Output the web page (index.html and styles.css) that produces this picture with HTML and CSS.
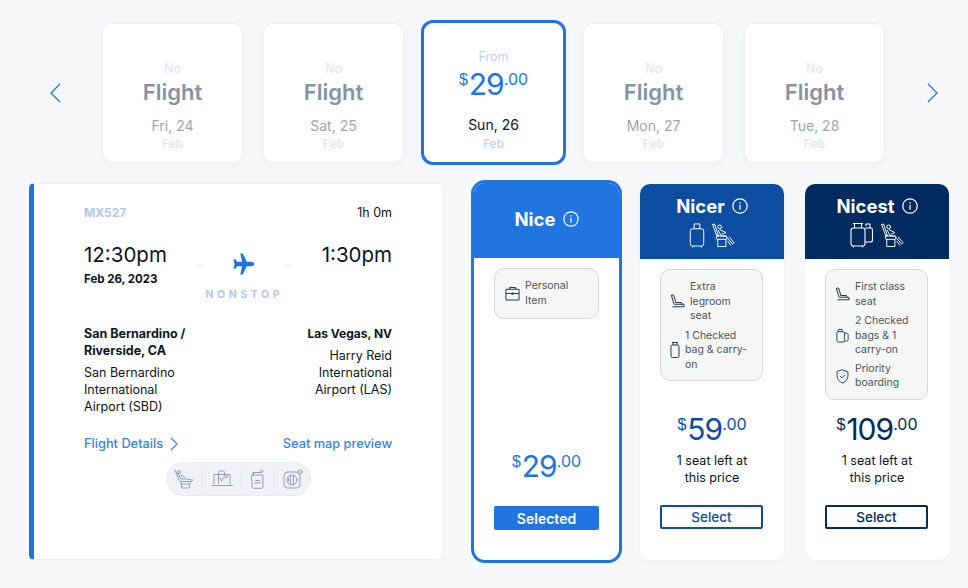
FILE: index.html
```html
<!DOCTYPE html>
<html lang="en">
<head>
    <meta charset="UTF-8">
    <title>Select fare</title>
    <link rel="stylesheet" href="styles.css">
</head>
<body>

<svg class="sprite" xmlns="http://www.w3.org/2000/svg">
    <symbol id="info" viewBox="0 0 16 16">
        <circle cx="8" cy="8" r="7.2" fill="none" stroke="currentColor" stroke-width="1.2"/>
        <rect x="7.4" y="6.8" width="1.2" height="5" fill="currentColor"/>
        <rect x="7.4" y="4.2" width="1.2" height="1.4" fill="currentColor"/>
    </symbol>
    <symbol id="recline" viewBox="0 0 24 26">
        <g fill="none" stroke="currentColor" stroke-width="1" stroke-linejoin="round" stroke-linecap="round">
            <circle cx="8" cy="4" r="2"/>
            <path d="M.7 1.500L2.700 1l4 12.500H5L.7 1.500z"/>
            <path d="M6.500 7.500l3 6h5M8.500 7l6 3-4 1.500"/>
            <rect x="4.500" y="13.500" width="11" height="3.500" rx="1.200"/>
            <path d="M6 17v7.500h8.500V17"/>
            <path d="M16 15.500l5.500 6.500 1.500-1.500-5-6M16.500 19l3 4"/>
        </g>
    </symbol>
    <symbol id="suitcase" viewBox="0 0 16 26">
        <g fill="none" stroke="currentColor" stroke-width="1" stroke-linejoin="round">
            <path d="M5 6V1h6v5"/>
            <rect x="1" y="6" width="14" height="18" rx="2.500"/>
            <path d="M3.500 24v1.500M12.500 24v1.500"/>
        </g>
    </symbol>
    <symbol id="two-bags" viewBox="0 0 24 26">
        <g fill="none" stroke="currentColor" stroke-width="1.100" stroke-linejoin="round">
            <path d="M4.500 6V1.500h7V6"/>
            <path d="M3 1.500h10"/>
            <rect x="1" y="6" width="14" height="18" rx="2.500"/>
            <path d="M3.500 24v1.500M12.500 24v1.500"/>
            <path d="M16 4V2h4v4"/>
            <path d="M15 6h5.500a2 2 0 0 1 2 2v10a2 2 0 0 1-2 2H15"/>
        </g>
    </symbol>
    <symbol id="briefcase" viewBox="0 0 16 16">
        <g fill="none" stroke="currentColor" stroke-width="1.100" stroke-linejoin="round">
            <path d="M5 3.500V1.500h6v2"/>
            <rect x="1" y="3.500" width="14" height="11.500" rx="1"/>
            <path d="M1 8h14"/>
            <path d="M7.500 7.500h1v1.300h-1z"/>
        </g>
    </symbol>
    <symbol id="seat" viewBox="0 0 16 16">
        <g fill="none" stroke="currentColor" stroke-width="1.100" stroke-linejoin="round" stroke-linecap="round">
            <path d="M1.500 1.500c1-.8 2.300-.5 2.700.6l2 6.900h5.300c.8 0 1.200.5 1.200 1.200v.8"/>
            <path d="M3 13.500h11c.8 0 1.200-.5 1-1.200l-.5-1.300H5.500c-.8 0-1.300-.5-1.600-1.300L1.500 1.500"/>
        </g>
    </symbol>
    <symbol id="bag" viewBox="0 0 10 18">
        <g fill="none" stroke="currentColor" stroke-width="1" stroke-linejoin="round">
            <path d="M3 4V1.500h4V4M2 1.500h6"/>
            <rect x="1" y="4" width="8" height="12.500" rx="1.500"/>
        </g>
    </symbol>
    <symbol id="bags" viewBox="0 0 14 16">
        <g fill="none" stroke="currentColor" stroke-width="1" stroke-linejoin="round">
            <path d="M2.500 4V1.500h4V4"/>
            <rect x="1" y="4" width="8" height="11" rx="1.500"/>
            <path d="M9 5.500h2.500c.8 0 1.500.6 1.500 1.500v5.500c0 .8-.7 1.500-1.500 1.500H9"/>
        </g>
    </symbol>
    <symbol id="shield" viewBox="0 0 14 16">
        <g fill="none" stroke="currentColor" stroke-width="1" stroke-linejoin="round" stroke-linecap="round">
            <path d="M7 1l5.800 2v4.500c0 3.500-2.500 6-5.800 7.500C3.700 13.500 1.200 11 1.200 7.500V3z"/>
            <path d="M4.700 7.800l1.700 1.700 3-3"/>
        </g>
    </symbol>
</svg>

<div class="date-row">
    <svg class="arrow arrow-left" viewBox="0 0 12 20"><path d="M11 1L2 10l9 9"/></svg>

    <div class="day-card">
        <div class="day-top">No</div>
        <div class="day-flight">Flight</div>
        <div class="day-date">Fri, 24</div>
        <div class="day-month">Feb</div>
    </div>
    <div class="day-card">
        <div class="day-top">No</div>
        <div class="day-flight">Flight</div>
        <div class="day-date">Sat, 25</div>
        <div class="day-month">Feb</div>
    </div>
    <div class="day-card day-selected">
        <div class="day-top">From</div>
        <div class="price day-price"><span class="cur">$</span><span class="amt">29</span><span class="cents">.00</span></div>
        <div class="day-date">Sun, 26</div>
        <div class="day-month">Feb</div>
    </div>
    <div class="day-card">
        <div class="day-top">No</div>
        <div class="day-flight">Flight</div>
        <div class="day-date">Mon, 27</div>
        <div class="day-month">Feb</div>
    </div>
    <div class="day-card">
        <div class="day-top">No</div>
        <div class="day-flight">Flight</div>
        <div class="day-date">Tue, 28</div>
        <div class="day-month">Feb</div>
    </div>

    <svg class="arrow arrow-right" viewBox="0 0 12 20"><path d="M1 1l9 9-9 9"/></svg>
</div>

<div class="main-row">
    <div class="flight-card">
        <div class="flight-head">
            <span class="flight-no">MX527</span>
            <span class="duration">1h 0m</span>
        </div>

        <div class="times">
            <div>
                <div class="time">12:30pm</div>
                <div class="flight-date">Feb 26, 2023</div>
            </div>
            <div class="stop">
                <div class="stop-line">
                    <span class="dash"></span>
                    <svg class="plane" viewBox="0 0 22 22"><path d="M21.500 11c0-1.200-1.500-2.300-3.500-2.300h-4.300L9.800.5H7.300l1.800 8.200H4.200L2.500 6.200H.6L1.500 11 .6 15.800h1.900l1.700-2.500h4.900l-1.800 8.200h2.500l3.900-8.200H18c2 0 3.500-1.100 3.500-2.300z"/></svg>
                    <span class="dash"></span>
                </div>
                <div class="nonstop">NONSTOP</div>
            </div>
            <div class="time">1:30pm</div>
        </div>

        <div class="route">
            <div>
                <div class="city">San Bernardino /<br>Riverside, CA</div>
                <div class="airport">San Bernardino<br>International<br>Airport (SBD)</div>
            </div>
            <div class="route-right">
                <div class="city">Las Vegas, NV</div>
                <div class="airport">Harry Reid<br>International<br>Airport (LAS)</div>
            </div>
        </div>

        <div class="links">
            <a class="link">Flight Details
                <svg class="link-arrow" viewBox="0 0 8 14"><path d="M1 1l6 6-6 6"/></svg>
            </a>
            <a class="link">Seat map preview</a>
        </div>

        <div class="amenities">
            <svg class="amenity" width="20" height="20" viewBox="0 0 20 20">
                <circle cx="5" cy="3" r="1.500"/>
                <path d="M1 1l4 10c.4 1 1 1.500 2 1.500h10c1 0 1.500-.5 1.500-1.500"/>
                <path d="M3 3l4 7h6l5 1M6 6l5 2"/>
                <rect x="6.500" y="12.500" width="10" height="2.500" rx="1"/>
                <path d="M7.500 15v4h8v-4"/>
            </svg>
            <span class="sep"></span>
            <svg class="amenity" width="22" height="20" viewBox="0 0 22 20">
                <path d="M3 15V5.500h16V15"/>
                <path d="M.8 16.500h20.400"/>
                <path d="M7.500 15V3.500c0-1 .5-1.500 1.500-1.500h3c1 0 1.500.5 1.500 1.500V6"/>
                <path d="M9 9l1.500 3.500L12 9"/>
                <circle cx="14.500" cy="7.500" r="1.500"/>
            </svg>
            <span class="sep"></span>
            <svg class="amenity" width="16" height="20" viewBox="0 0 16 20">
                <path d="M2 6h11v12c0 .8-.5 1.300-1.300 1.300H3.300C2.500 19.300 2 18.800 2 18z"/>
                <path d="M3.500 6V3.500h6.500M3 6V4"/>
                <circle cx="11.500" cy="2.500" r="1.300"/>
                <path d="M5.500 11.500h4M4.500 14h6"/>
            </svg>
            <span class="sep"></span>
            <svg class="amenity" width="20" height="20" viewBox="0 0 20 20">
                <rect x="1" y="3" width="16" height="16" rx="3.500"/>
                <circle cx="9" cy="11" r="5"/>
                <path d="M7.500 7v8M10.500 7v8M5.500 9v3"/>
                <circle cx="17" cy="3" r="2" fill="#f0f2f8"/>
            </svg>
        </div>
    </div>

    <div class="fare fare-nice">
        <div class="fare-head">
            <div class="fare-title">Nice <svg class="info"><use href="#info"/></svg></div>
        </div>
        <div class="perks perks-single">
            <div class="perk">
                <svg class="perk-icon"><use href="#briefcase"/></svg>
                <span>Personal<br>Item</span>
            </div>
        </div>
        <div class="fare-foot">
            <div class="price fare-price"><span class="cur">$</span><span class="amt">29</span><span class="cents">.00</span></div>
            <button class="btn btn-selected">Selected</button>
        </div>
    </div>

    <div class="fare fare-nicer">
        <div class="fare-head">
            <div class="fare-title">Nicer <svg class="info"><use href="#info"/></svg></div>
            <div class="fare-icons">
                <svg class="head-bag"><use href="#suitcase"/></svg>
                <svg class="head-seat"><use href="#recline"/></svg>
            </div>
        </div>
        <div class="perks">
            <div class="perk">
                <svg class="perk-icon"><use href="#seat"/></svg>
                <span>Extra<br>legroom<br>seat</span>
            </div>
            <div class="perk">
                <svg class="perk-icon perk-icon-bag"><use href="#bag"/></svg>
                <span>1 Checked<br>bag &amp; carry-<br>on</span>
            </div>
        </div>
        <div class="fare-foot">
            <div class="price fare-price"><span class="cur">$</span><span class="amt">59</span><span class="cents">.00</span></div>
            <div class="seats">1 seat left at<br>this price</div>
            <button class="btn">Select</button>
        </div>
    </div>

    <div class="fare fare-nicest">
        <div class="fare-head">
            <div class="fare-title">Nicest <svg class="info"><use href="#info"/></svg></div>
            <div class="fare-icons">
                <svg class="head-bags"><use href="#two-bags"/></svg>
                <svg class="head-seat"><use href="#recline"/></svg>
            </div>
        </div>
        <div class="perks">
            <div class="perk">
                <svg class="perk-icon"><use href="#seat"/></svg>
                <span>First class<br>seat</span>
            </div>
            <div class="perk">
                <svg class="perk-icon"><use href="#bags"/></svg>
                <span>2 Checked<br>bags &amp; 1<br>carry-on</span>
            </div>
            <div class="perk perk-last">
                <svg class="perk-icon"><use href="#shield"/></svg>
                <span>Priority<br>boarding</span>
            </div>
        </div>
        <div class="fare-foot">
            <div class="price fare-price"><span class="cur">$</span><span class="amt">109</span><span class="cents">.00</span></div>
            <div class="seats">1 seat left at<br>this price</div>
            <button class="btn">Select</button>
        </div>
    </div>
</div>

</body>
</html>
```

FILE: styles.css
```css
body {
    font-family: Inter, "Noto Sans", sans-serif;
    background-color: #f7f8f9;
    margin: 0;
    color: #0b1526;
    overflow: hidden;
}

.sprite {
    display: none;
}

/* date strip */
.date-row {
    display: flex;
    align-items: center;
    height: 145px;
    padding: 20px 0 0 45px;
}

.arrow {
    width: 20px;
    height: 20px;
    fill: none;
    stroke: #2175e0;
    stroke-width: 1.300;
    flex: none;
}

.arrow-left {
    margin-right: 37px;
}

.arrow-right {
    margin-left: 38px;
}

.day-card {
    width: 141px;
    height: 140px;
    box-sizing: border-box;
    padding-top: 38px;
    margin-right: 20px;
    background-color: #fff;
    border: 1px solid #ecf1f8;
    border-radius: 10px;
    box-shadow: 0 3px 8px rgba(30, 60, 110, 0.03);
    text-align: center;
}

.day-card:nth-of-type(5) {
    margin-right: 0;
}

.day-top {
    font-size: 12.500px;
    line-height: 14px;
    font-weight: 500;
    color: #dfe7f8;
}

.day-flight {
    font-size: 22px;
    line-height: 28px;
    font-weight: 600;
    color: #8792a2;
    margin-top: 2px;
}

.day-date {
    font-size: 14px;
    line-height: 16px;
    color: #a0a5b0;
    margin-top: 12px;
}

.day-month {
    font-size: 12px;
    line-height: 14px;
    font-weight: 600;
    color: #e0e8f8;
    margin-top: 3px;
}

.day-selected {
    width: 145px;
    height: 145px;
    padding-top: 27px;
    margin: 0 17px 0 -3px;
    border: 3px solid #2175e0;
    border-radius: 12px;
}

.day-selected .day-top {
    color: #bccdf1;
    font-weight: 400;
}

.day-selected .day-date {
    color: #0b1526;
    margin-top: 15px;
}

.day-selected .day-month {
    color: #c3d2f3;
    font-weight: 500;
    margin-top: 4px;
}

/* prices */
.price {
    display: flex;
    justify-content: center;
    color: #2175e0;
}

.cur {
    font-family: "Liberation Sans", sans-serif;
    font-size: 16px;
    line-height: 20px;
    margin-top: 4px;
    margin-right: 1px;
}

.amt {
    font-size: 30px;
    line-height: 36px;
    letter-spacing: -1px;
}

.cents {
    font-size: 16px;
    line-height: 20px;
    margin-top: 3px;
}

.day-price {
    margin-top: 2px;
}

/* flight card */
.main-row {
    display: flex;
    align-items: flex-start;
    padding: 15px 0 0 29px;
}

.flight-card {
    width: 415px;
    height: 377px;
    box-sizing: border-box;
    margin-top: 3px;
    padding: 20px 51px 0 50px;
    background-color: #fff;
    border: 1px solid #ecf1f8;
    border-left: 5px solid #2175e0;
    border-radius: 5px;
}

.flight-head,
.times,
.route,
.links {
    display: flex;
    justify-content: space-between;
    align-items: flex-start;
}

.flight-head {
    line-height: 18px;
}

.flight-no {
    font-size: 12px;
    font-weight: 700;
    color: #b5c6ee;
}

.duration {
    font-size: 12.500px;
}

.times {
    margin-top: 19px;
}

.time {
    font-size: 20.500px;
    line-height: 28px;
}

.flight-date {
    font-size: 11.500px;
    line-height: 16px;
    font-weight: 700;
    margin-top: 2px;
}

.stop {
    display: flex;
    flex-direction: column;
    align-items: center;
    padding-top: 12px;
}

.stop-line {
    display: flex;
    align-items: center;
    gap: 29px;
    height: 22px;
}

.dash {
    width: 8px;
    height: 1px;
    background-color: #e3e8f2;
    margin-top: 3px;
}

.plane {
    width: 22px;
    height: 22px;
    fill: #2175e0;
}

.nonstop {
    font-size: 10.500px;
    line-height: 14px;
    font-weight: 700;
    letter-spacing: 3.600px;
    color: #b5c6ee;
    margin-top: 13px;
}

.route {
    margin-top: 23px;
}

.route-right {
    text-align: right;
}

.city {
    font-size: 12.500px;
    line-height: 17px;
    font-weight: 700;
}

.route-right .city {
    font-size: 12px;
}

.airport {
    font-size: 12.500px;
    line-height: 17px;
    margin-top: 5px;
}

.links {
    margin-top: 20px;
}

.link {
    display: flex;
    align-items: center;
    gap: 7px;
    font-size: 12.800px;
    line-height: 18px;
    font-weight: 500;
    color: #3b82e6;
}

.link-arrow {
    width: 8px;
    height: 14px;
    fill: none;
    stroke: #3b82e6;
    stroke-width: 1.200;
}

.amenities {
    display: flex;
    align-items: center;
    justify-content: center;
    gap: 8px;
    width: 145px;
    height: 34px;
    box-sizing: border-box;
    margin: 9px auto 0;
    background-color: #f0f2f8;
    border: 1px solid #e8ebf4;
    border-radius: 17px;
}

.amenity {
    fill: none;
    stroke: #8f9dbd;
    stroke-width: 1;
    stroke-linejoin: round;
    stroke-linecap: round;
    flex: none;
}

.sep {
    width: 1px;
    height: 20px;
    background-color: #e3e6ef;
    flex: none;
}

/* fares */
.fare {
    display: flex;
    flex-direction: column;
    box-sizing: border-box;
    width: 144px;
    height: 376px;
    margin-top: 4px;
    background-color: #fff;
    border-radius: 10px;
    box-shadow: 0 2px 6px rgba(30, 60, 110, 0.03);
    overflow: hidden;
}

.fare-nice {
    width: 151px;
    height: 383px;
    margin: 0 0 0 27px;
    border: 3px solid #2175e0;
    border-radius: 14px;
    --tier: #2175e0;
}

.fare-nicer {
    margin-left: 18px;
    --tier: #0c4da2;
}

.fare-nicest {
    margin-left: 21px;
    --tier: #012a5e;
}

.fare-head {
    height: 75px;
    background-color: var(--tier);
    color: #fff;
    text-align: center;
    padding-top: 10px;
    box-sizing: border-box;
}

.fare-nice .fare-head {
    height: 75px;
    padding-top: 24px;
}

.fare-title {
    display: flex;
    justify-content: center;
    align-items: center;
    gap: 7px;
    font-size: 18.500px;
    line-height: 24px;
    font-weight: 700;
}

.info {
    width: 16px;
    height: 16px;
}

.fare-icons {
    display: flex;
    justify-content: center;
    align-items: flex-end;
    gap: 7px;
    height: 26px;
    margin-top: 4px;
}

.head-bag {
    width: 16px;
    height: 25px;
}

.head-bags {
    width: 24px;
    height: 26px;
}

.head-seat {
    width: 23px;
    height: 25px;
}

.perks {
    width: 103px;
    box-sizing: border-box;
    margin: 10px 0 0 20px;
    padding: 10px 8px 8px 9px;
    background-color: #f5f7f7;
    border: 1px solid #d5d9d9;
    border-radius: 10px;
    font-size: 10.500px;
    line-height: 14.500px;
    color: #4a5560;
}

.perks-single {
    width: 105px;
    height: 51px;
    margin-left: 20px;
    padding: 10px 8px 0 10px;
}

.perk {
    display: flex;
    align-items: center;
    gap: 5px;
}

.perk + .perk {
    margin-top: 5px;
}

.perk + .perk-last {
    margin-top: 4px;
}

.perk-icon {
    width: 15px;
    height: 15px;
    flex: none;
    color: #2b3a4e;
}

.perk-icon-bag {
    width: 10px;
    height: 18px;
}

.fare-foot {
    margin-top: auto;
    padding-bottom: 31px;
    text-align: center;
}

.fare-nice .fare-foot {
    padding-bottom: 30px;
}

.fare-price {
    color: var(--tier);
}

.seats {
    font-size: 12.500px;
    line-height: 17px;
    margin-top: 5px;
    color: #0b1526;
}

.btn {
    display: block;
    width: 103px;
    height: 24px;
    box-sizing: border-box;
    margin: 19px 0 0 20px;
    padding: 0;
    background-color: #fff;
    border: 2px solid var(--tier);
    border-radius: 2px;
    font-family: inherit;
    font-size: 13.500px;
    font-weight: 500;
    color: var(--tier);
}

.fare-nice .btn {
    width: 105px;
}

.btn-selected {
    background-color: #2175e0;
    border: none;
    color: #fff;
    font-size: 14px;
    font-weight: 600;
    margin-top: 22px;
}
```
